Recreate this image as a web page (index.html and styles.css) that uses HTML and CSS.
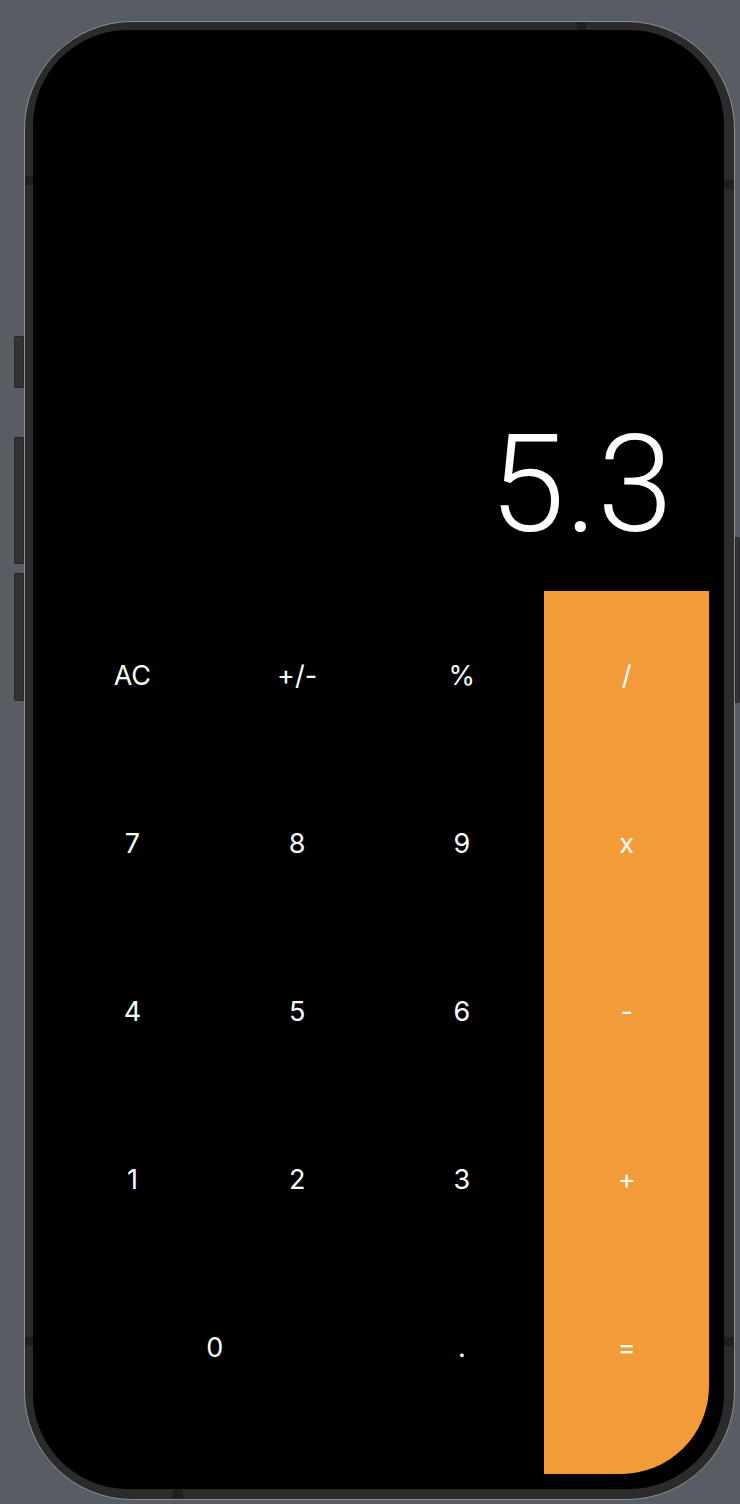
FILE: index.html
```html
<!DOCTYPE html>
<html lang="en">
<head>
<meta charset="utf-8">
<title>Calculator</title>
<link rel="stylesheet" href="styles.css">
</head>
<body>
<div class="device">
  <span class="side-btn silent"></span>
  <span class="side-btn vol-up"></span>
  <span class="side-btn vol-down"></span>
  <span class="side-btn power"></span>
  <span class="band band-lt"></span>
  <span class="band band-lb"></span>
  <span class="band band-rt"></span>
  <span class="band band-rb"></span>
  <span class="band band-top"></span>
  <span class="band band-bottom"></span>
  <div class="screen">
    <div class="app">
      <div class="display"><span class="value">5.3</span></div>
      <div class="keypad">
        <div class="key">AC</div>
        <div class="key">+/-</div>
        <div class="key">%</div>
        <div class="key op">/</div>
        <div class="key">7</div>
        <div class="key">8</div>
        <div class="key">9</div>
        <div class="key op">x</div>
        <div class="key">4</div>
        <div class="key">5</div>
        <div class="key">6</div>
        <div class="key op">-</div>
        <div class="key">1</div>
        <div class="key">2</div>
        <div class="key">3</div>
        <div class="key op">+</div>
        <div class="key zero">0</div>
        <div class="key">.</div>
        <div class="key op">=</div>
      </div>
    </div>
  </div>
</div>
</body>
</html>
```

FILE: styles.css
```css
html, body {
  margin: 0;
  padding: 0;
}
body {
  width: 740px;
  height: 1504px;
  overflow: hidden;
  background: #585c63;
  font-family: "Inter", "Liberation Sans", sans-serif;
}
.device {
  position: relative;
  box-sizing: border-box;
  margin: 21px 0 0 24px;
  width: 711px;
  height: 1479px;
  border: 1px solid #8e9094;
  border-radius: 108px;
  background: #2b2b2b;
  padding: 8px 10px 10px 8px;
}
.side-btn {
  position: absolute;
  background: #333436;
  border: 1px solid #26272a;
  box-sizing: border-box;
}
.silent { left: -11px; top: 314px; width: 10px; height: 52px; border-radius: 2px 0 0 2px; }
.vol-up { left: -11px; top: 415px; width: 10px; height: 127px; border-radius: 2px 0 0 2px; }
.vol-down { left: -11px; top: 551px; width: 10px; height: 128px; border-radius: 2px 0 0 2px; }
.power { right: -6px; top: 515px; width: 5px; height: 166px; border-radius: 0 2px 2px 0; }
.band {
  position: absolute;
  background: #1e1e1e;
}
.band-lt { left: 0; top: 154px; width: 8px; height: 9px; }
.band-lb { left: 0; top: 1315px; width: 8px; height: 9px; }
.band-rt { right: 0; top: 158px; width: 10px; height: 9px; }
.band-rb { right: 0; top: 1315px; width: 10px; height: 9px; }
.band-top { top: 0; left: 552px; width: 9px; height: 8px; }
.band-bottom { bottom: 0; left: 148px; width: 10px; height: 10px; }
.screen {
  box-sizing: border-box;
  height: 100%;
  background: #000;
  border-radius: 95px;
  padding: 15px 15px 15px 17px;
}
.app {
  height: 100%;
  display: flex;
  flex-direction: column;
  border-radius: 88px;
  overflow: hidden;
}
.display {
  flex: 1;
  display: flex;
  align-items: flex-end;
  justify-content: flex-end;
  padding: 0 36px 38px 0;
}
.value {
  font-family: "Roboto", "Liberation Sans", sans-serif;
  font-weight: 300;
  font-size: 136px;
  line-height: 1;
  color: #fff;
}
.keypad {
  height: 883px;
  box-sizing: border-box;
  display: grid;
  grid-template-columns: repeat(4, 1fr);
  grid-auto-rows: 168px;
  padding-bottom: 43px;
  background: linear-gradient(to right, transparent 75%, #f29b39 75%);
}
.key {
  display: flex;
  align-items: center;
  justify-content: center;
  color: #fff;
  font-size: 27px;
  line-height: 1;
}
.zero {
  grid-column: span 2;
}
```
